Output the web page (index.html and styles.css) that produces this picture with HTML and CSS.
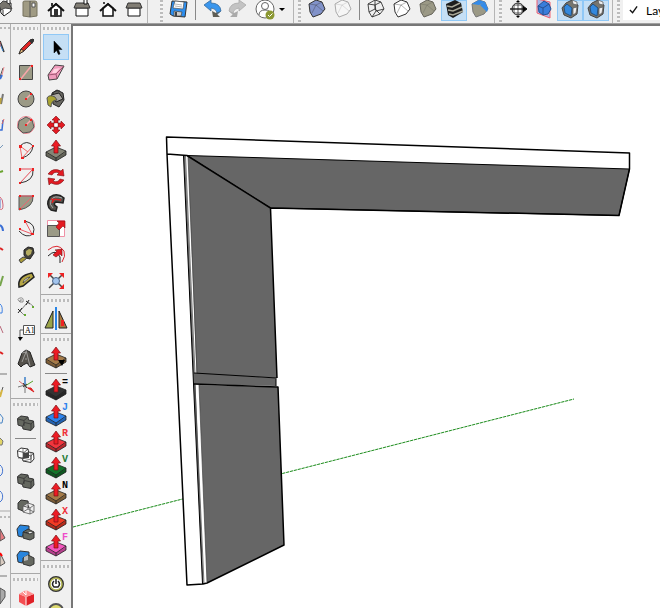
FILE: index.html
```html
<!DOCTYPE html>
<html lang="en">
<head>
<meta charset="utf-8">
<title>Model editor</title>
<link rel="stylesheet" href="styles.css">
</head>
<body>
<svg class="defs" aria-hidden="true">
  <defs>
    <symbol id="push" viewBox="0 0 26 26">
      <path d="M3 14 13 9 23 13V17L13 23 3 18Z" fill="currentColor"/>
      <path d="M3 15 13 20 23 14V17L13 23 3 18Z" fill="#000" opacity=".25"/>
      <path d="M3 14 13 9 23 13V17L13 23 3 18ZM3 14 13 20 23 13M13 20V23" fill="none" stroke="#222" stroke-width=".8"/>
      <path d="M13 2 17.500 8H15V15H11V8H8.500Z" fill="#ed1c24" stroke="#7a1014" stroke-width=".7"/>
    </symbol>
    <symbol id="solids" viewBox="0 0 26 26">
      <path d="M4.500 8.500 8 6 15 7 15.500 10 20.500 11 21 17 18 20.500 10 19 9.500 16.500 5 15Z" stroke="#333"/>
      <path d="M5 9 11 10.500 15 7M11 10.500V16M9.500 16.500 11.500 12.500 18 14 20.500 11M18 14V20" fill="none" stroke="#333" stroke-width=".8"/>
    </symbol>
    <symbol id="cube" viewBox="0 0 26 21">
      <path d="M5 4 12 0 18 2 21 9 17 14 9 17 6 12Z"/>
      <path d="M5 4 12 5 18 2M12 5 19 11 21 9M12 5 8 13" fill="none" stroke-width=".6" opacity=".6"/>
    </symbol>
    <symbol id="house" viewBox="0 0 26 21">
      <path d="M5 8 9 3 15 0 18 4 21 5 20 14 14 18 7 15Z" fill="#77756d" stroke="#444"/>
      <path d="M15 0 20 2 20 5 16 4ZM16 8 20 7 19 13 16 15Z" fill="#eee" stroke="#555" stroke-width=".7"/>
      <path d="M7 7 10 4 15 8 14 16 8 13Z" fill="#3388dd" stroke="#28517b"/>
    </symbol>
  </defs>
</svg>

<header class="topbar">
  <div class="group views">
    <button class="tool half" aria-label="Iso"><svg viewBox="0 0 17 21"><path d="M0 7 4 2 11 3 11 11 4 16 1 13Z" fill="#fff" stroke="#222"/><path d="M-1 5 3 1 8 2 12 9 5 8 1 10Z" fill="#77746d" stroke="#444"/><path d="M7-1h3v5l-3-1zM3 10v5" fill="#fff" stroke="#333"/></svg></button>
    <button class="tool" aria-label="Top"><svg viewBox="0 0 26 21"><path d="M6 2Q6 1 8 1H18Q20 1 20 3V16L13 17 6 16Z" fill="#a09b84" stroke="#77735f"/><path d="M13 1V17" stroke="#555"/><path d="M15 3h3v4h-3z" fill="#fff" stroke="#555"/></svg></button>
    <button class="tool" aria-label="Front"><svg viewBox="0 0 26 21"><path d="M8 8v8h10V8l-5-4z" fill="#fff" stroke="#111" stroke-width="1.500"/><path d="M5 11 13 4 21 11" fill="none" stroke="#111" stroke-width="2"/><path d="M11 9h4v8h-4zM8 3h2v3H8z" fill="#333"/></svg></button>
    <button class="tool" aria-label="Right"><svg viewBox="0 0 26 21"><path d="M7 8h12v8H7z" fill="#fff" stroke="#111"/><path d="M7 3h12l2 5H5z" fill="#817d74" stroke="#333"/><path d="M15-1h3v5h-3z" fill="#fff" stroke="#111"/></svg></button>
    <button class="tool" aria-label="Back"><svg viewBox="0 0 26 21"><path d="M8 3h2M8 8v8h10V8l-5-4z" fill="#fff" stroke="#111" stroke-width="1.500"/><path d="M5 11 13 4 21 11" fill="none" stroke="#111" stroke-width="2"/></svg></button>
    <button class="tool" aria-label="Left"><svg viewBox="0 0 26 21"><path d="M7 8h12v8H7z" fill="#fff" stroke="#111"/><path d="M7 3h12l2 5H5z" fill="#817d74" stroke="#333"/></svg></button>
  </div>
  <div class="group file">
    <i class="grip"></i>
    <button class="tool" aria-label="Save"><svg viewBox="0 0 26 21"><path d="M6 1 21 2 19 17 7 16 4 14Z" fill="#2d8ff0" stroke="#333"/><path d="M9 1 18 2 17 9 7 8Z" fill="#fff" stroke="#555" stroke-width=".7"/><path d="M9 4 16 5M9 6 16 7" stroke="#999" stroke-width=".7"/><path d="M8 11 16 12 15 16H8Z" fill="#ccc" stroke="#444" stroke-width=".7"/><path d="M9 12h2v4H9z" fill="#444"/></svg></button>
    <i class="rule"></i>
    <button class="tool" aria-label="Undo"><svg viewBox="0 0 26 21"><path d="M5 5 12 0V3Q21 3 22 11L16 16 18 12Q16 8 12 8V11Z" fill="#3a96ed" stroke="#356a9c" stroke-width=".8"/><path d="M13 11 17 13 22 11 18 14 21 17H14Z" fill="#5f5e56"/></svg></button>
    <button class="tool" aria-label="Redo"><svg viewBox="0 0 26 21"><path d="M21 5 14 0V3Q5 3 4 11L10 16 8 12Q10 8 14 8V11Z" fill="#c3c3c3" stroke="#aaa" stroke-width=".8"/><path d="M13 11 9 13 4 11 8 14 5 17H12Z" fill="#aaa"/></svg></button>
    <button class="tool account" aria-label="Account"><svg viewBox="0 0 38 21"><g fill="#fff" stroke="#666"><circle cx="14" cy="9" r="9"/><circle cx="14" cy="6" r="3.500"/><path d="M8 15Q8 10 14 10T20 15" fill="none"/></g><circle cx="19" cy="15" r="4.500" fill="#8b9832"/><path d="m17 15 1.500 1.500 3-3" fill="none" stroke="#fff"/><path d="M28 8h6l-3 3z"/></svg></button>
  </div>
  <div class="group styles">
    <i class="grip"></i>
    <button class="tool" aria-label="X-ray"><svg class="edge" fill="#8192c9"><use href="#cube"/></svg></button>
    <button class="tool" aria-label="Back edges"><svg class="edge pale" fill="#f6f6f6"><use href="#cube"/></svg></button>
    <i class="rule"></i>
    <button class="tool" aria-label="Wireframe"><svg class="edge" viewBox="0 0 26 21" fill="none" stroke-width=".9"><path d="M5 4 12 0 18 2 21 9 17 14 9 17 6 12ZM5 4 12 5 18 2M12 5 13 11 9 17M13 11 21 9M6 12 12 9 17 14M12 0V9"/></svg></button>
    <button class="tool" aria-label="Hidden line"><svg class="edge" fill="#fff"><use href="#cube"/></svg></button>
    <button class="tool" aria-label="Shaded"><svg class="edge soft" fill="#9b9986"><use href="#cube"/></svg></button>
    <button class="tool on" aria-label="Shaded with textures"><svg viewBox="0 0 26 21"><path d="M5 4 14 0 20 3 22 12 12 18 7 15Z" fill="#1d1d1d"/><path d="M6 6 11 7 19 3M7 10 12 11 21 7M8 14 12 15 22 11" fill="none" stroke="#aaa898" stroke-width="1.500"/></svg></button>
    <button class="tool" aria-label="Monochrome"><svg viewBox="0 0 26 21"><path d="M5 4 12 0 18 2 21 9 17 14 9 17 6 12Z" fill="#9b9986" stroke="#777"/><path d="M5 4 12 0 18 2 12 5ZM18 2 21 9 20 12 13 5Z" fill="#338bea"/></svg></button>
  </div>
  <div class="group sections">
    <i class="grip"></i>
    <button class="tool" aria-label="Section plane"><svg viewBox="0 0 26 21"><circle cx="13" cy="9" r="6" fill="#fff" stroke="#222"/><path d="M5 9h16M13 1v16M9 5h8v8H9z" fill="none" stroke="#333" stroke-width=".8"/><path d="m18 6 4 3-4 3zM5 9h13" stroke="#111"/><path d="m11 2 2-2 2 2zM11 16l2 2 2-2z"/></svg></button>
    <button class="tool" aria-label="Display section planes"><svg viewBox="0 0 26 21"><path d="M6-1 19 2V18L6 13Z" fill="#a8b6e7" stroke="#ef6070"/><path d="M7 6 13 1 18 4 20 9 17 14 12 15 8 12Z" fill="#397ddb" stroke="#285090"/><path d="m7 6 5 2 6-4m-6 4 0 7" fill="none" stroke="#285090"/></svg></button>
    <button class="tool on" aria-label="Display section cuts"><svg><use href="#house"/></svg></button>
    <button class="tool on" aria-label="Display section fill"><svg><use href="#house"/></svg></button>
  </div>
  <div class="group layers">
    <i class="grip"></i>
    <button class="combo"><svg viewBox="0 0 10 10"><path d="m1 5 3 3 5-7" fill="none" stroke="#111" stroke-width="1.500"/></svg>Lay</button>
  </div>
</header>

<main class="work">
  <nav class="rail clipped" aria-label="Additional tools">
    <svg viewBox="0 24 10 584" preserveAspectRatio="xMinYMin meet" fill="none">
      <g stroke="#b9b9b9" stroke-width="2" stroke-dasharray="2 2"><path d="M0 28H10M0 517H10"/></g>
      <path d="M0 511H10" stroke="#aaa"/><path d="M0 374H7M0 576H7" stroke="#777"/>
      <path d="m0 41 4 11" stroke="#333" stroke-width="1.500"/><path d="m0 44 3 7" stroke="#3b87d5"/><path d="M0 42V47" stroke="#d66"/>
      <path d="m3 68-3 9" stroke="#555"/><path d="m4 67-2 8" stroke="#ed8a90"/><path d="m2 75-2 4" stroke="#3b6fd5" stroke-width="2"/>
      <path d="m3 94-2 10" stroke="#777" stroke-width="2"/><path d="m1 98-1 6" stroke="#bba343" stroke-width="2"/>
      <path d="m3 120-1 10H0" stroke="#3b6fd5" stroke-width="1.500"/><path d="m4 119-2 5" stroke="#d66"/>
      <path d="M0 148 3 145" stroke="#7799bb"/><path d="M0 172 3 171" stroke="#6aa32f" stroke-width="2"/>
      <path d="M0 197Q3 199 3 205T0 209" stroke="#d16478"/><path d="M0 199V208" stroke="#5674c9"/>
      <path d="M0 225Q3 227 3 231" stroke="#3b6fd5" stroke-width="2"/><path d="M0 248 3 250" stroke="#dd2525" stroke-width="2"/>
      <path d="m3 276-3 10" stroke="#76a54c" stroke-width="2"/><path d="M0 304Q3 306 2 313H0" stroke="#3f82e5"/><path d="m0 326 3 7" stroke="#b8687a"/><path d="m0 352 3 2" stroke="#d22" stroke-width="2"/>
      <path d="m3 387-3 9" stroke="#555"/><path d="m2 390-2 7" stroke="#d6b542" stroke-width="2"/><path d="m0 414 3 4-1 5H0" stroke="#4b86c5"/><path d="m0 438 3 3-1 4H0" fill="#e3d668" stroke="#777"/>
      <path d="M0 465Q4 468 2 474L0 476M0 491Q4 494 2 500L0 502" stroke="#4676d2"/>
      <path d="m0 529 5 9-5 3z" fill="#e77d83" stroke="#555"/><path d="m0 553 5 10-5 3z" fill="#d9ccc1" stroke="#555"/><path d="m0 553 2 3" stroke="red" stroke-width="2"/><path d="m0 588 5 3v6l-5 7z" fill="#aaa" stroke="#555"/>
    </svg>
  </nav>

  <nav class="rail" aria-label="Drawing tools">
    <div class="stack">
      <i class="grip"></i>
      <button class="tool" aria-label="Line"><svg viewBox="0 0 26 26"><path d="M6 20 8 15 17 6 20 5 20 8 11 17Z" fill="#df2525" stroke="#222" stroke-width=".8"/><path d="M16 7 18 5 21 5 21 7 19 10Z" fill="#333"/><path d="m8 15 3 2-5 3z" fill="#dfb77b" stroke="#222" stroke-width=".8"/></svg></button>
      <button class="tool" aria-label="Rectangle"><svg viewBox="0 0 26 26"><path d="M6.500 5.500h13v14h-13z" fill="#9b9a86" stroke="#444"/><path d="M7 20 19 5" stroke="#f9a6aa" stroke-width="1.500"/><path d="M6 18h2v2H6zM18 5h2v2h-2z" fill="#e22"/></svg></button>
      <button class="tool" aria-label="Circle"><svg viewBox="0 0 26 26"><circle cx="13" cy="13" r="8" fill="#9b9a86" stroke="#444"/><path d="m13 13 5-5" stroke="#f9a6aa" stroke-width="1.500"/><path d="M12 12h2v2h-2zM17 7h2v2h-2z" fill="#e22"/></svg></button>
      <button class="tool" aria-label="Polygon"><svg viewBox="0 0 26 26"><circle cx="13" cy="13" r="8.500" fill="none" stroke="#ec6370" stroke-width=".8"/><path d="m13 5 6 3 2 7-4 5-7 1-5-5 1-7Z" fill="#9b9a86" stroke="#555"/><path d="m13 13 5-5" stroke="#f9a6aa" stroke-width="1.500"/><path d="M12 12h2v2h-2zM17 7h2v2h-2z" fill="#e22"/></svg></button>
      <button class="tool" aria-label="Arc"><svg viewBox="0 0 26 26" fill="none"><path d="M7 8 9 20 20 8M7 8 15 14" stroke="#e66"/><path d="M7 8Q14 1 20 8 19 17 9 20" stroke="#333"/><path d="M6 7h3v3H6zM19 7h2v2h-2zM8 19h3v2H8z" fill="#e22"/></svg></button>
      <button class="tool" aria-label="Two point arc"><svg viewBox="0 0 26 26"><path d="M7 5H20L7 19" fill="none" stroke="#e64b57"/><path d="M20 6Q21 17 7 19" fill="none" stroke="#333"/><path d="M6 4h2v3H6zM19 4h2v3h-2zM6 18h2v2H6z" fill="#e22"/></svg></button>
      <button class="tool" aria-label="Pie"><svg viewBox="0 0 26 26"><path d="M6 6H20Q21 17 6 20Z" fill="#9b9a86" stroke="#555"/><path d="M6 6H20L6 20" fill="none" stroke="#ec6370"/><path d="M6 5h2v2H6zM19 5h2v2h-2zM6 18h2v2H6z" fill="#e22"/></svg></button>
      <button class="tool" aria-label="Three point arc"><svg viewBox="0 0 26 26"><path d="M12 5Q24 8 20 18 13 23 6 15" fill="none" stroke="#333"/><path d="M12 5 19 18 6 13" fill="none" stroke="#ed5965"/><path d="M11 4h2v3h-2zM18 17h3v2h-3zM6 12h2v2H6z" fill="#e22"/></svg></button>
      <button class="tool" aria-label="Tape measure"><svg viewBox="0 0 26 26"><path d="m11 8 4-3 5 1 1 5-4 6-4-1-2-3z" fill="#44423b" stroke="#222"/><path d="m13 9 3-2 3 1-1 4-3 2-2-2z" fill="#b5ac60"/><path d="m10 15-4 3 2 3 6-5z" fill="#a99b38" stroke="#444"/></svg></button>
      <button class="tool" aria-label="Protractor"><svg viewBox="0 0 26 26"><path d="M6 19Q4 8 19 5L21 9 10 18Z" fill="#b6a745" stroke="#222" stroke-width="1.500"/><path d="M10 15Q11 10 17 9Z" fill="#f0f0f0" stroke="#333" stroke-width=".7"/></svg></button>
      <button class="tool" aria-label="Dimension"><svg viewBox="0 0 26 26" fill="none"><path d="m7 17 8-9" stroke="#777"/><path d="m5 15 4 4m0-5-4 5m8-12 4 3m-1-4-3 5" stroke="#222"/><path d="M7 8Q3 5 7 4 11 3 10 8H7Q6 5 9 6M15 8l5 4M7 17l5 5" stroke="#777" stroke-width=".8"/><path d="M19 12h2v2h-2zM11 20h2v2h-2z" fill="#6a3"/></svg></button>
      <button class="tool" aria-label="Text"><svg viewBox="0 0 26 26"><path d="M10.500 5.500h11v9h-11zM10 10H7v8" fill="#fff" stroke="#555"/><path d="M5 17h5l-3 4z"/><text class="label" x="12" y="13">A1</text></svg></button>
      <button class="tool" aria-label="3D text"><svg viewBox="0 0 26 26"><path d="m5 18 4-11 4-3 4 2 4 11 1 2-5 2-3-4-4 2-2 2Z" fill="#55524c" stroke="#222"/><path d="m13 4 4 16M9 7l4-1-4 10m3-3 2 0" fill="none" stroke="#bbb" stroke-width=".7"/></svg></button>
      <button class="tool" aria-label="Axes"><svg viewBox="0 0 26 26"><path d="M12 5v9" stroke="#3b7fc8" stroke-width="1.500"/><path d="m6 9 10 8" stroke="#d66"/><path d="m5 15 7-2v8" fill="none" stroke="#777"/><path d="m12 14 8-5" stroke="#58a52b"/><path d="m15 16 6 4-3-4z" fill="#e22" stroke="#d22"/><path d="m10 11 4 5m-4-1 4-3" stroke="#333"/></svg></button>
    </div>
    <div class="stack">
      <i class="grip"></i>
      <button class="tool" aria-label="Outer shell"><svg fill="#656860"><use href="#solids"/></svg></button>
      <i class="divider"></i>
      <button class="tool" aria-label="Intersect"><svg viewBox="0 0 26 26" fill="#fff"><use href="#solids"/><path d="M10 11 16 10V16L10 17Z" fill="#444"/><path d="M10 6V16H5M18 10V17L10 19" fill="none" stroke="#555" stroke-width=".7"/></svg></button>
      <button class="tool" aria-label="Union"><svg fill="#656860"><use href="#solids"/></svg></button>
      <button class="tool" aria-label="Subtract"><svg viewBox="0 0 26 26"><path d="m5 9 3-3 7 1 1 9-6 1-5-2z" fill="#656860" stroke="#333"/><path d="m10 12 5-3 6 2v7l-4 2-7-2zM10 12l7 2 4-3m-4 3v6M15 9v6l-5 3m5-3 6 3" fill="#eee" stroke="#555" stroke-width=".8"/></svg></button>
      <button class="tool" aria-label="Trim"><svg viewBox="0 0 26 26"><path d="m4 9 3-4 9 1v6l-5 1-2 4-4-1z" fill="#2885de" stroke="#333"/><path d="m10 12 5-3 6 3v6l-4 2-7-2zM10 12l7 2 4-2" fill="#656860" stroke="#333"/></svg></button>
      <button class="tool" aria-label="Split"><svg viewBox="0 0 26 26"><path d="m4 9 3-4 9 1v6l-5 1-2 4-4-1z" fill="#2885de" stroke="#333"/><path d="m10 12 5-3 6 3v6l-4 2-7-2z" fill="#656860" stroke="#333"/><path d="m11 11 4-2v5l-4 1z" fill="#bbb"/></svg></button>
    </div>
    <div class="stack">
      <i class="grip"></i>
      <button class="tool" aria-label="Component"><svg viewBox="0 0 26 26"><path d="m6 9 7 3v9l-7-4z" fill="#f44d51"/><path d="m21 9-8 3v9l8-4z" fill="#df2027"/><path d="m6 9 7-4 8 4-8 3z" fill="#ff9090"/><path d="M13 12v9M10 7l3 3V5" fill="none" stroke="#fff"/></svg></button>
    </div>
  </nav>

  <nav class="rail" aria-label="Editing tools">
    <div class="stack">
      <i class="grip"></i>
      <button class="tool on" aria-label="Select"><svg viewBox="0 0 26 26"><path d="M11 7V19L13.500 16.500 15.500 20.500 17 20 15.500 15.500H19Z" stroke="#000" stroke-width=".5"/></svg></button>
      <button class="tool" aria-label="Eraser"><svg viewBox="0 0 26 26"><path d="M5 15 12 5 21 6 14 19 6 20Z" fill="#ef9bbc" stroke="#444"/><path d="m5 15 8-1 8-8m-8 8 1 5" fill="none" stroke="#8b4660" stroke-width=".8"/><path d="m11 9 6-1-4 5-4 0z" fill="#ffd3e1"/></svg></button>
      <button class="tool" aria-label="Paint bucket"><svg viewBox="0 0 26 26"><path d="m9 7 5-3 6 3 1 7-5 7-6-3z" fill="#686761" stroke="#222"/><path d="m8 9 8-2 4 6-7 3z" fill="#aaa8a2" stroke="#222"/><path d="M12 11Q6 8 4 12L5 19 8 21Q8 14 14 14Z" fill="#aaa532" stroke="#555"/><path d="M10 9Q10 4 17 5" fill="none" stroke="#333"/></svg></button>
      <button class="tool" aria-label="Move"><svg viewBox="0 0 26 26" fill="#e31a22" stroke="#7a1014" stroke-width=".6"><path d="m13 4 4 4h-2v3h-4V8H9zM13 22l4-4h-2v-3h-4v3H9zM4 13l4-4v2h3v4H8v2zM22 13l-4-4v2h-3v4h3v2z"/><path d="M11.500 11.500h3v3h-3z" fill="#fff" stroke="none"/></svg></button>
      <button class="tool" aria-label="Push pull"><svg color="#858576"><use href="#push"/></svg></button>
      <button class="tool" aria-label="Rotate"><svg viewBox="0 0 26 26" fill="#e31a22" stroke="#7a1014" stroke-width=".6"><path d="M5 10Q10 3 18 7L20 5 21 12 14 11 16 9Q11 7 9 11ZM21 16Q16 23 8 19L6 21 5 14 12 15 10 17Q15 19 17 15Z"/></svg></button>
      <button class="tool" aria-label="Follow me"><svg viewBox="0 0 26 26"><path d="M21 8Q14 2 7 7 2 15 8 20L13 21 14 17Q9 14 13 12L20 13Z" fill="#55534d" stroke="#222" stroke-width="1.500"/><path d="M19 8Q11 5 8 10 6 15 10 18" fill="none" stroke="#aaa"/><path d="M18 10 12 9 9 13 10 10 8 9Z" fill="#d22" stroke="#d22"/></svg></button>
      <button class="tool" aria-label="Scale"><svg viewBox="0 0 26 26"><path d="M4.500 4.500h17v16h-17z" fill="#fff" stroke="#ef91a6"/><path d="M4.500 9.500h12v11h-12z" fill="#9b9a86" stroke="#555"/><path d="m13 11 3-4-2-2h8v7l-2-2-4 4z" fill="#e31a22" stroke="#8c1114" stroke-width=".6"/></svg></button>
      <button class="tool" aria-label="Offset"><svg viewBox="0 0 26 26" fill="none"><path d="M5 8Q15 0 21 9 23 14 19 20" stroke="#df2831"/><path d="M5 14Q13 6 17 15V21" stroke="#222"/><path d="m10 13 4-4-2-1 7-1v7l-2-2-4 3z" fill="#e31a22" stroke="#7a1014" stroke-width=".6"/></svg></button>
      <button class="tool" aria-label="Zoom extents"><svg viewBox="0 0 26 26"><path d="m7 7 4 4m8-4-4 4M6 20l5-5m8 4-4-4" stroke="#444" stroke-width="1.500"/><path d="M5 5h5L5 10zM21 5h-5l5 5zM21 21h-5l5-5z" fill="#e22"/><circle cx="13" cy="13" r="3.500" fill="#a3c4ed" stroke="#4d6587"/></svg></button>
    </div>
    <div class="stack">
      <i class="grip"></i>
      <button class="tool" aria-label="Mirror"><svg viewBox="0 0 26 26"><path d="M10 5V22H2Z" fill="#9ba448" stroke="#222"/><path d="M16 5V22h8Z" fill="#a67a42" stroke="#222"/><path d="M18 14h3v6h-3z" fill="#e22"/><path d="M13 1v23" stroke="#2784e6" stroke-width="2"/></svg></button>
    </div>
    <div class="stack">
      <i class="grip"></i>
      <button class="tool" aria-label="Joint push pull"><svg viewBox="0 0 26 26" color="#a57b49"><use href="#push"/><path d="M15 15h7l-3 6z"/></svg></button>
      <i class="divider"></i>
      <button class="tool" aria-label="Repeat push"><svg viewBox="0 0 26 26" color="#333"><use href="#push"/><text class="mark" x="19" y="8">=</text></svg></button>
      <button class="tool" aria-label="Joint"><svg viewBox="0 0 26 26" color="#2e83ed"><use href="#push"/><text class="mark blue" x="19" y="7">J</text></svg></button>
      <button class="tool" aria-label="Round"><svg viewBox="0 0 26 26" color="#f2353d"><use href="#push"/><text class="mark red" x="19" y="7">R</text></svg></button>
      <button class="tool" aria-label="Vector"><svg viewBox="0 0 26 26" color="#14752b"><use href="#push"/><text class="mark green" x="19" y="7">V</text></svg></button>
      <button class="tool" aria-label="Normal"><svg viewBox="0 0 26 26" color="#a57b49"><use href="#push"/><text class="mark" x="19" y="7">N</text></svg></button>
      <button class="tool" aria-label="Extrude"><svg viewBox="0 0 26 26" color="#f33a24"><use href="#push"/><text class="mark red" x="19" y="7">X</text></svg></button>
      <button class="tool" aria-label="Follow"><svg viewBox="0 0 26 26" color="#f356bd"><use href="#push"/><text class="mark pink" x="19" y="7">F</text></svg></button>
    </div>
    <div class="stack">
      <i class="grip"></i>
      <button class="tool" aria-label="Power"><svg viewBox="0 0 26 26" fill="none"><circle cx="13" cy="12" r="7" fill="#fff" stroke="#333" stroke-width="2"/><circle cx="13" cy="12" r="6" stroke="#b4b654" stroke-width="1.500"/><path d="M11 9Q8 12 11 15H15Q18 12 15 9M13 7v5" stroke="#222" stroke-width="1.500"/></svg></button>
      <button class="tool" aria-label="Settings"><svg viewBox="0 0 26 26"><circle cx="13" cy="13" r="7" fill="#ddda70" stroke="#555" stroke-width="2"/></svg></button>
    </div>
  </nav>

  <section class="viewport" aria-label="Model">
    <svg viewBox="73 26 587 582" preserveAspectRatio="xMinYMin meet" fill="none" stroke="#000" stroke-linejoin="round">
      <path d="M73 527 574 399" stroke="#d3ead3"/>
      <path d="M73 527 574 399" stroke="#259025" stroke-dasharray="3 1"/>
      <path d="M166.500 137 629.500 153V169L619 215.500 271 208 277.500 379 276 386 278 388 284 545 207 583 187 585 167 154Z" fill="#fff" stroke="none"/>
      <path d="M187 155.500 629.500 169 619 215.500 270.500 208Z" fill="#666"/>
      <path d="M188 156 270.500 208 277 378 196.500 374Z" fill="#666" stroke="none"/>
      <path d="M194 373 276 378V386L194 384Z" fill="#666" stroke="none"/>
      <path d="M199 385 278 387 284 545 207 583Z" fill="#666" stroke="none"/>
      <path d="M183.500 156H185L194.500 373 195.500 385 203.500 584 202.500 584 193 373Z" fill="#666" stroke="none"/>
      <path d="M183.500 156 193.500 384 202.500 584"/>
      <path stroke="#444" stroke-width=".7" d="M185.500 156 195 373M195 385 204 584M188 156 197 373M199 385 207 582"/>
      <path d="M194 373 277 378M276 379V386"/>
      <path stroke-width="1.500" d="M270.500 208 277 378M194 384 278 387 284 545 207 583 203 584 187 585 167 154 166.500 137 629.500 153V169L619 215.500 270.500 208 187 155.500 167 154"/>
    </svg>
  </section>
</main>
</body>
</html>
```
FILE: styles.css
```css
* { box-sizing: border-box; }

body {
  margin: 0;
  height: 100vh;
  display: flex;
  flex-direction: column;
  overflow: hidden;
  background: #f0f0f0;
  font: 12px Lato, "Noto Sans", sans-serif;
}

.defs { position: absolute; width: 0; height: 0; }

.topbar {
  display: flex;
  flex: none;
  height: 24px;
  overflow: hidden;
  border-bottom: 1px solid #a0a0a0;
}

.group {
  display: flex;
  flex: none;
  border-right: 1px solid #b5b5b5;
}

.views { margin-right: 8px; }
.file { padding-right: 4px; }
.styles { padding-right: 1px; }
.sections { padding-right: 3px; }
.layers { flex: 1 0 0; border: 0; }

.topbar .grip {
  width: 3px;
  margin: 0 3px 0 4px;
  background: repeating-linear-gradient(#bcbcbc 0 2px, #f4f4f4 2px 4px);
}

.rule {
  width: 1px;
  height: 20px;
  margin: 0 3px;
  background: #888;
}

.tool {
  display: block;
  flex: none;
  width: 26px;
  height: 26px;
  padding: 0;
  border: 0;
  background: none;
  color: inherit;
}

.tool svg {
  display: block;
  width: 100%;
  height: 100%;
}

.topbar .tool { height: 21px; }
.topbar .half { width: 17px; }
.topbar .account { width: 38px; }

.tool.on {
  background: #c5dff5;
  box-shadow: inset 0 0 0 1px #90c8f6;
}

.edge { stroke: #333; }
.pale { stroke: #aaa; }
.soft { stroke: #66645a; }

.combo {
  display: flex;
  align-items: center;
  gap: 8px;
  flex: 1;
  height: 20px;
  padding: 0 0 0 6px;
  border: 0;
  background: #fff;
  font: inherit;
}

.combo svg { flex: none; width: 9px; height: 10px; }

.work {
  display: flex;
  flex: 1;
  min-height: 0;
}

.rail {
  flex: none;
  width: 30px;
  overflow: hidden;
  border-right: 1px solid #b0b0b0;
}

.rail:nth-of-type(3) { border: 0; }
.rail.clipped { width: 11px; }
.clipped svg { display: block; width: 10px; height: 584px; }

.stack {
  display: flex;
  flex-direction: column;
  padding: 3px 2px 0;
  border-bottom: 1px solid #a8a8a8;
}

.stack + .stack { padding: 4px 2px 1px; }

.stack .grip {
  height: 3px;
  margin: 0 0 4px;
  background: repeating-linear-gradient(90deg, #bcbcbc 0 2px, #f4f4f4 2px 4px);
}

.divider {
  height: 1px;
  margin: 2px 2px 3px;
  background: #888;
}

.label { font: 8px "Liberation Serif", serif; }

.mark { font: bold 10px "Liberation Mono", monospace; }
.blue { fill: #2e83ed; }
.red { fill: #ef3038; }
.green { fill: #267b35; }
.pink { fill: #ee4cc9; }

.viewport {
  flex: 1;
  min-width: 0;
  border: solid #777;
  border-width: 2px 0 0 2px;
  background: #fff;
}

.viewport svg { display: block; width: 100%; height: 100%; }
```
